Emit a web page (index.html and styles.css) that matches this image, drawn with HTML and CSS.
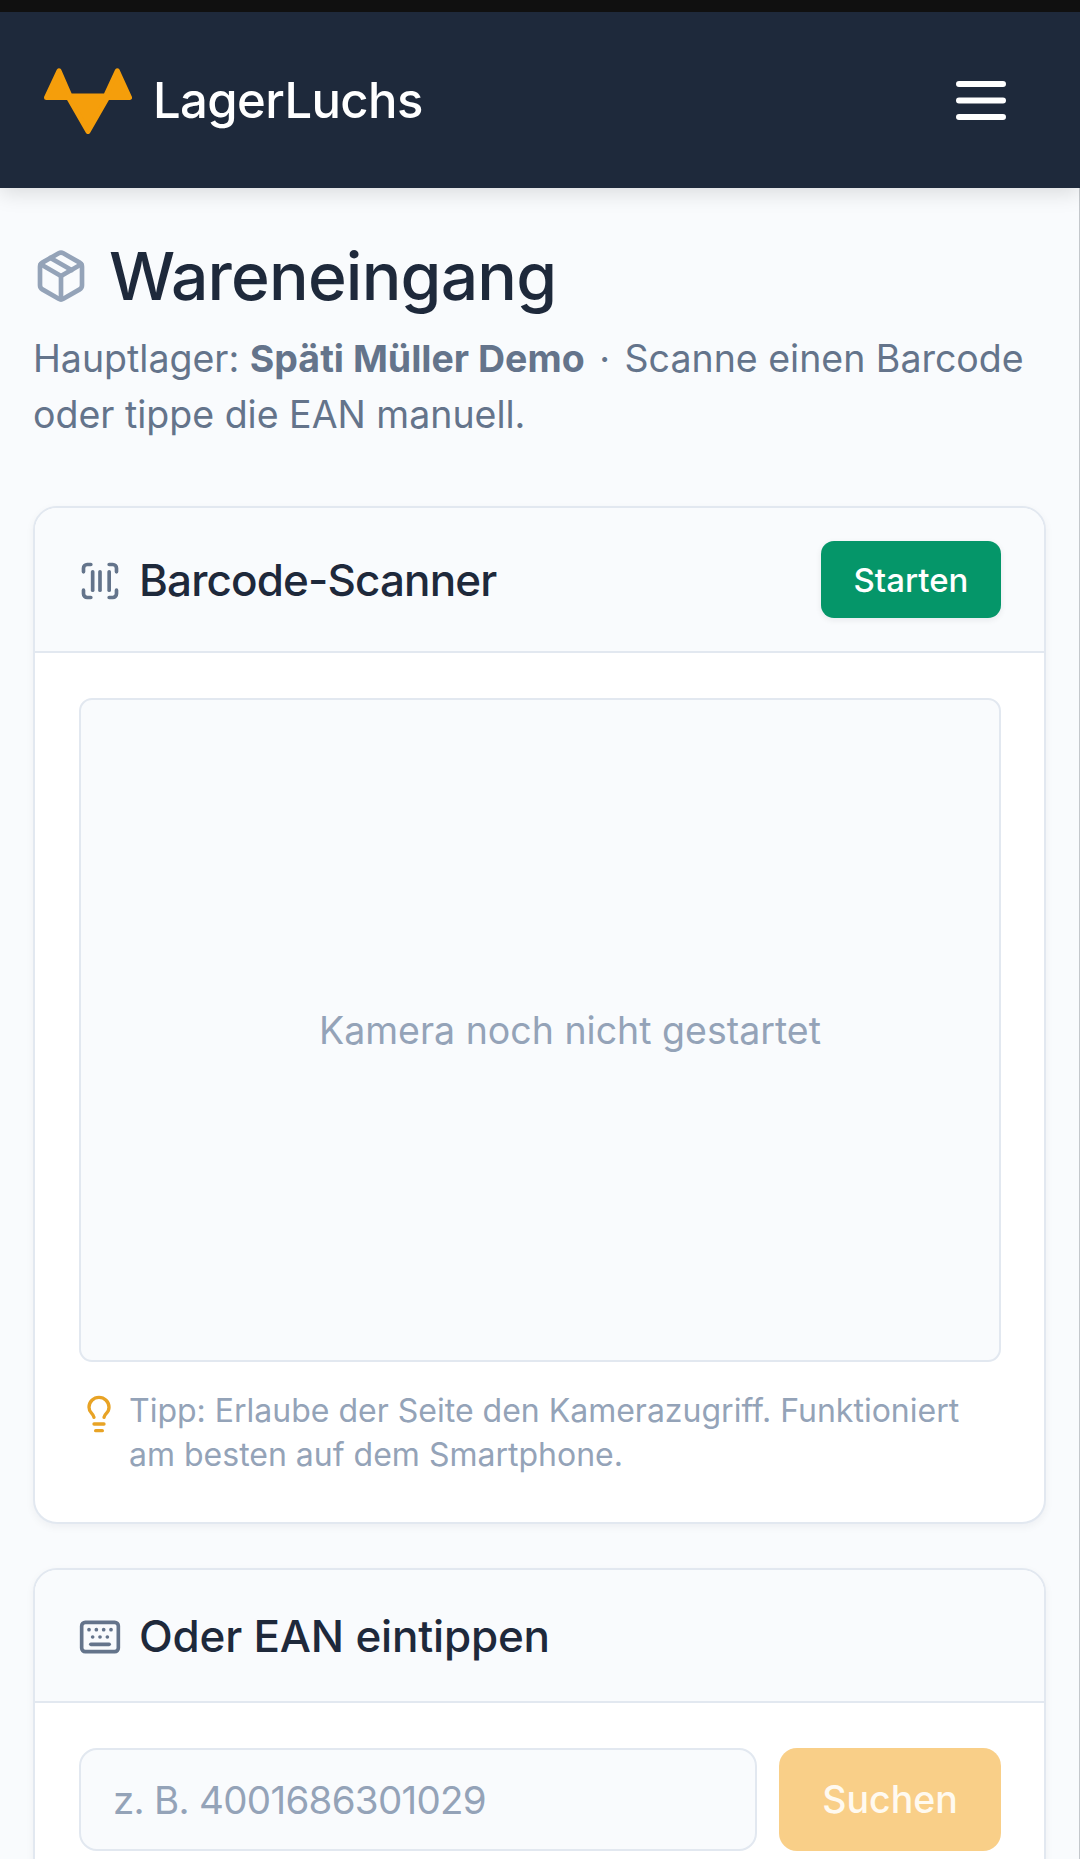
FILE: index.html
```html
<!DOCTYPE html>
<html lang="de">
<head>
    <meta charset="UTF-8">
    <meta name="viewport" content="width=device-width, initial-scale=1.0">
    <title>LagerLuchs</title>
    <link rel="stylesheet" href="styles.css">
</head>
<body>

    <div class="status-bar"></div>

    <!-- Navbar -->
    <header class="navbar">
        <div class="brand">
            <svg class="brand-logo" viewBox="0 0 88 67">
                <path d="M2.5 30.5 L15 3.8 L26 29 L61.6 29 L73.3 3.8 L85.5 30.5 L63.5 30.5 L44 64.5 L24.5 30.5 Z" fill="#f59e0b" stroke="#f59e0b" stroke-width="5" stroke-linejoin="round"/>
            </svg>
            <span class="brand-name">LagerLuchs</span>
        </div>
        <svg class="menu-icon" viewBox="0 0 50 39">
            <path d="M3 3h44M3 19.5h44M3 36h44" fill="none" stroke="#fff" stroke-width="6" stroke-linecap="round"/>
        </svg>
    </header>

    <main class="content">
        <h1 class="page-title">
            <svg class="title-icon" viewBox="0 0 24 24" fill="none" stroke="#94a3b8" stroke-width="2" stroke-linecap="round" stroke-linejoin="round">
                <path d="M11 21.73a2 2 0 0 0 2 0l7-4A2 2 0 0 0 21 16V8a2 2 0 0 0-1-1.73l-7-4a2 2 0 0 0-2 0l-7 4A2 2 0 0 0 3 8v8a2 2 0 0 0 1 1.73z"/>
                <path d="M12 22V12"/>
                <path d="m3.3 7 8.7 5 8.7-5"/>
                <path d="m7.5 4.27 9 5.15"/>
            </svg>
            Wareneingang
        </h1>
        <p class="page-sub">Hauptlager: <strong>Späti Müller Demo</strong> <span class="sep">·</span> Scanne einen Barcode oder tippe die EAN manuell.</p>

        <!-- Scanner -->
        <section class="card">
            <div class="card-head">
                <h2 class="card-title title-tight">
                    <svg class="head-icon" viewBox="0 0 24 24" fill="none" stroke="#64748b" stroke-width="2" stroke-linecap="round" stroke-linejoin="round">
                        <path d="M3 7V5a2 2 0 0 1 2-2h2"/>
                        <path d="M17 3h2a2 2 0 0 1 2 2v2"/>
                        <path d="M21 17v2a2 2 0 0 1-2 2h-2"/>
                        <path d="M7 21H5a2 2 0 0 1-2-2v-2"/>
                        <path d="M8 7v10"/>
                        <path d="M12 7v10"/>
                        <path d="M17 7v10"/>
                    </svg>
                    Barcode-Scanner
                </h2>
                <button class="btn-start">Starten</button>
            </div>
            <div class="card-body">
                <div class="camera-box">Kamera noch nicht gestartet</div>
                <div class="tip">
                    <svg class="tip-icon" viewBox="0 0 24 24" fill="none" stroke="#e8a325" stroke-width="2" stroke-linecap="round" stroke-linejoin="round">
                        <path d="M15 14c.2-1 .7-1.7 1.5-2.5 1-.9 1.5-2.2 1.5-3.5A6 6 0 0 0 6 8c0 1 .2 2.2 1.5 3.5.7.7 1.3 1.5 1.5 2.5"/>
                        <path d="M9 18h6"/>
                        <path d="M10 22h4"/>
                    </svg>
                    <span>Tipp: Erlaube der Seite den Kamerazugriff. Funktioniert am besten auf dem Smartphone.</span>
                </div>
            </div>
        </section>

        <!-- Manual entry -->
        <section class="card">
            <div class="card-head">
                <h2 class="card-title">
                    <svg class="head-icon" viewBox="0 0 24 24" fill="none" stroke="#64748b" stroke-width="2" stroke-linecap="round" stroke-linejoin="round">
                        <path d="M10 8h.01"/>
                        <path d="M12 12h.01"/>
                        <path d="M14 8h.01"/>
                        <path d="M16 12h.01"/>
                        <path d="M18 8h.01"/>
                        <path d="M6 8h.01"/>
                        <path d="M7 16h10"/>
                        <path d="M8 12h.01"/>
                        <rect width="20" height="16" x="2" y="4" rx="2"/>
                    </svg>
                    Oder EAN eintippen
                </h2>
            </div>
            <div class="card-body">
                <div class="search-row">
                    <input class="ean-input" type="text" placeholder="z. B. 4001686301029">
                    <button class="btn-search">Suchen</button>
                </div>
            </div>
        </section>
    </main>

</body>
</html>
```

FILE: styles.css
```css
* {
    box-sizing: border-box;
}

html, body {
    height: 1859px;
    overflow: hidden;
}

body {
    margin: 0;
    font-family: "Inter", "Noto Sans", sans-serif;
    background-color: #f9fbfd;
    color: #1e293b;
}

.status-bar {
    height: 12px;
    background: #111111;
}

.navbar {
    height: 176px;
    padding: 0 74px 0 44px;
    display: flex;
    justify-content: space-between;
    align-items: center;
    background: #1e293b;
    box-shadow: 0 5px 20px rgba(0, 0, 0, 0.13);
    position: relative;
}

.brand {
    display: flex;
    align-items: center;
    gap: 21px;
}

.brand-logo {
    width: 88px;
    height: 67px;
}

.brand-name {
    font-size: 49px;
    font-weight: 500;
    letter-spacing: -0.6px;
    color: #ffffff;
}

.menu-icon {
    width: 50px;
    height: 39px;
}

.content {
    height: 1671px;
    padding: 40px 33px 0 33px;
    border-right: 1px solid #c4c8cc;
}

.page-title {
    display: flex;
    align-items: center;
    gap: 20px;
    margin: 0;
    font-size: 66px;
    line-height: 96px;
    font-weight: 500;
    letter-spacing: -0.8px;
}

.title-icon {
    width: 56px;
    height: 56px;
}

.page-sub {
    margin: 7px 0 63px;
    font-size: 37.5px;
    line-height: 56px;
    color: #64748b;
}

.page-sub strong {
    font-weight: 700;
}

.sep {
    margin: 0 4px;
}

.card {
    margin-bottom: 44px;
    background: #ffffff;
    border: 2px solid #e2e8f0;
    border-radius: 24px;
    box-shadow: 0 3px 8px rgba(15, 23, 42, 0.05);
    overflow: hidden;
}

.card-head {
    display: flex;
    justify-content: space-between;
    align-items: center;
    padding: 33px 43px;
    background: #f9fbfd;
    border-bottom: 2px solid #e2e8f0;
}

.card-title {
    display: flex;
    align-items: center;
    gap: 17px;
    margin: 0;
    padding-top: 2px;
    font-size: 44px;
    line-height: 63px;
    font-weight: 500;
    letter-spacing: -0.2px;
}

.title-tight {
    letter-spacing: -0.87px;
}

.head-icon {
    width: 44px;
    height: 44px;
}

.btn-start {
    height: 77px;
    width: 180px;
    font-family: inherit;
    font-size: 33px;
    font-weight: 500;
    color: #ffffff;
    background: #059669;
    border: none;
    border-radius: 13px;
    box-shadow: 0 2px 6px rgba(15, 23, 42, 0.08);
}

.card-body {
    padding: 45px 43px 45px 44px;
}

.camera-box {
    height: 664px;
    padding-left: 60px;
    display: flex;
    justify-content: center;
    align-items: center;
    font-size: 37.5px;
    color: #94a3b8;
    background: #f9fbfd;
    border: 2px solid #e2e8f0;
    border-radius: 13px;
}

.tip {
    display: flex;
    align-items: flex-start;
    gap: 10px;
    margin-top: 27px;
    font-size: 32px;
    line-height: 44px;
    color: #94a3b8;
}

.tip-icon {
    flex: none;
    width: 40px;
    height: 40px;
    margin-top: 5px;
}

.search-row {
    display: flex;
    gap: 22px;
}

.ean-input {
    flex: 1;
    min-width: 0;
    height: 103px;
    padding: 0 32px;
    font-family: inherit;
    font-size: 38.5px;
    letter-spacing: -0.7px;
    color: #1e293b;
    background: #f9fbfd;
    border: 2px solid #e2e8f0;
    border-radius: 18px;
}

.ean-input::placeholder {
    color: #94a3b8;
    opacity: 1;
}

.btn-search {
    width: 222px;
    height: 103px;
    font-family: inherit;
    font-size: 37.5px;
    font-weight: 500;
    color: #fffaf0;
    background: #f9cf88;
    border: none;
    border-radius: 18px;
}
```
